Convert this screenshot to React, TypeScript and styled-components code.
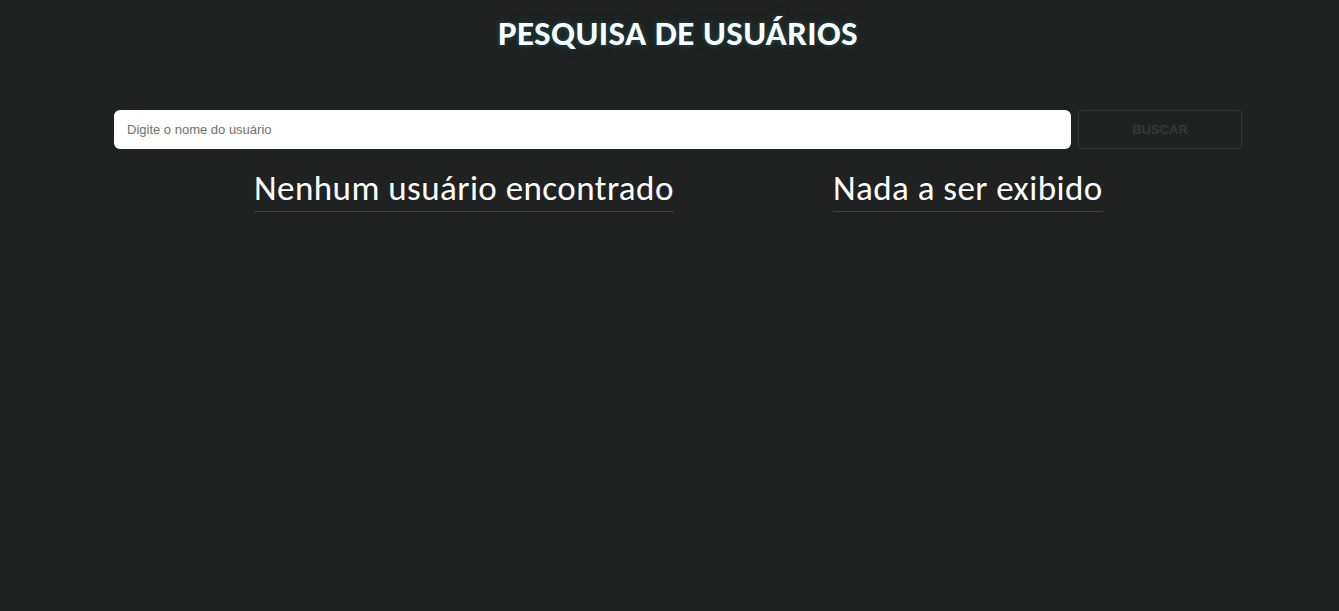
import React from "react";
import styled, { createGlobalStyle } from "styled-components";

const Global = createGlobalStyle`
  html, body { margin: 0; padding: 0; background: #202221; }
  body { font-family: Calibri, Carlito, Lato, "Open Sans", sans-serif; }
  * { box-sizing: border-box; }
`;

const Page = styled.div`
  min-height: 611px;
  background: #202221;
  display: flex;
  flex-direction: column;
  align-items: center;
  padding: 0 97px 0 114px;
`;

const Title = styled.h1`
  margin: 12px 0 0;
  height: 42px;
  font-family: Calibri, Carlito, Lato, "Open Sans", sans-serif;
  font-weight: 700;
  font-size: 35px;
  line-height: 42px;
  color: #ffffff;
  text-shadow: 0 0 4px #1d4a4a, 0 0 8px #16393a;
  letter-spacing: 0.4px;
`;

const SearchRow = styled.form`
  margin-top: 56px;
  width: 100%;
  display: flex;
  gap: 7px;
`;

const Input = styled.input`
  flex: 1;
  height: 39px;
  border: none;
  border-radius: 6px;
  background: #ffffff;
  padding: 0 13px;
  font-family: "Liberation Sans", Arial, sans-serif;
  font-size: 13px;
  outline: none;
  &::placeholder { color: #707070; }
`;

const Button = styled.button`
  width: 164px;
  height: 39px;
  background: transparent;
  border: 1px solid #363837;
  border-radius: 4px;
  color: #363837;
  font-family: "Liberation Sans", Arial, sans-serif;
  font-weight: 700;
  font-size: 13px;
`;

const Results = styled.div`
  width: 100%;
  display: grid;
  grid-template-columns: 700px 1fr;
  margin-top: 20px;
`;

const Column = styled.div<{ $pad: number }>`
  display: flex;
  padding-left: ${(p) => p.$pad}px;
`;

const Heading = styled.h2`
  margin: 0;
  padding-bottom: 3px;
  font-family: Calibri, Carlito, Lato, "Open Sans", sans-serif;
  font-weight: 400;
  font-size: 35px;
  letter-spacing: 0.45px;
  line-height: 39px;
  color: #ffffff;
  border-bottom: 1px solid #1d5252;
`;

export default function App() {
  return (
    <>
      <Global />
      <Page>
        <Title>PESQUISA DE USUÁRIOS</Title>
        <SearchRow onSubmit={(e) => e.preventDefault()}>
          <Input placeholder="Digite o nome do usuário" />
          <Button type="submit">BUSCAR</Button>
        </SearchRow>
        <Results>
          <Column $pad={140}>
            <Heading>Nenhum usuário encontrado</Heading>
          </Column>
          <Column $pad={19}>
            <Heading>Nada a ser exibido</Heading>
          </Column>
        </Results>
      </Page>
    </>
  );
}
